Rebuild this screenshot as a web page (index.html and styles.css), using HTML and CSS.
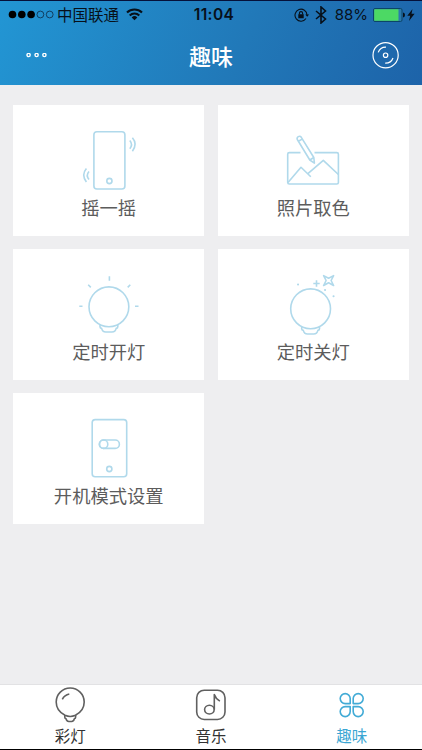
FILE: index.html
```html
<!DOCTYPE html>
<html lang="zh-CN">
<head>
    <meta charset="UTF-8">
    <meta name="viewport" content="width=device-width, initial-scale=1.0">
    <title>趣味</title>
    <link rel="stylesheet" href="styles.css">
</head>
<body>

<header class="header">
    <div class="status-bar">
        <div class="status-left">
            <svg class="signal" width="46" height="10" viewBox="0 0 46 10">
                <circle cx="4.500" cy="4.500" r="3.800"/>
                <circle cx="13.800" cy="4.500" r="3.800"/>
                <circle cx="23.100" cy="4.500" r="3.800"/>
                <circle class="off" cx="32.400" cy="4.500" r="3.400"/>
                <circle class="off" cx="41.700" cy="4.500" r="3.400"/>
            </svg>
            <span class="carrier">中国联通</span>
            <svg class="wifi" width="17" height="13" viewBox="0 0 17 13">
                <path d="M1 4.600a10.800 10.800 0 0 1 15 0M3.700 7.400a7 7 0 0 1 9.600 0"/>
                <path class="fill" d="M5.700 9.400a4.100 4.100 0 0 1 5.600 0L8.500 12.300z"/>
            </svg>
        </div>
        <span class="time">11:04</span>
        <div class="status-right">
            <svg class="lock" width="16" height="14" viewBox="0 0 16 14">
                <path d="M12 10.500A6 6 0 1 1 13 7"/>
                <path d="M5.400 6.500V5.200a1.600 1.600 0 0 1 3.200 0v1.300"/>
                <path class="fill" d="M4.300 6.200h5.400v4H4.300zM11.300 6.500h3.800L13.200 8.800z"/>
            </svg>
            <svg class="bluetooth" width="12" height="18" viewBox="0 0 12 18">
                <path d="M1 5l9.500 8L6 17V1l4.500 4L1 13"/>
            </svg>
            <span class="percent">88%</span>
            <svg class="battery" width="33" height="14" viewBox="0 0 33 14">
                <rect class="case" x="0.500" y="0.500" width="28.500" height="13" rx="1.500"/>
                <rect class="level" x="1.200" y="1.200" width="24.300" height="11.600" rx="0.600"/>
                <path d="M30 4.500q2 .4 2 2.500t-2 2.500z"/>
            </svg>
            <svg class="bolt" width="8" height="12" viewBox="0 0 8 12">
                <path d="M5.500 0L.3 6.700h2.900L2 12l5.600-7.200H4.500z"/>
            </svg>
        </div>
    </div>
    <div class="nav">
        <svg class="more" width="22" height="6" viewBox="0 0 22 6">
            <circle cx="2.600" cy="2" r="1.600"/>
            <circle cx="10.600" cy="2" r="1.600"/>
            <circle cx="18.400" cy="2" r="1.600"/>
        </svg>
        <h1 class="title">趣味</h1>
        <svg class="disc" width="28" height="28" viewBox="0 0 28 28">
            <circle cx="13.600" cy="13.200" r="12.600"/>
            <circle cx="13.600" cy="13.200" r="2.200"/>
            <path d="M6.200 10.400a8 8 0 0 1 7.800-5.200M21 16a8 8 0 0 1-7.800 5.200"/>
        </svg>
    </div>
</header>

<main class="grid">
    <div class="card">
        <svg class="icon" viewBox="0 0 80 70">
            <rect x="24.900" y="8.800" width="31" height="57.200" rx="3"/>
            <circle cx="40.400" cy="58" r="2.600"/>
            <path d="M60.800 17.500q3.400 4 0 8.300M63.400 14.800q5.400 6.200 0 13.400"/>
            <path d="M20 48.600q-3.400 4 0 8M17.400 45.600q-5.400 6.400 0 13.400"/>
        </svg>
        <p class="label">摇一摇</p>
    </div>
    <div class="card">
        <svg class="icon" viewBox="0 0 80 70">
            <path d="M27.500 29.600h-11.200a1.600 1.600 0 0 0-1.600 1.600v28.200a1.600 1.600 0 0 0 1.600 1.600h47.500a1.600 1.600 0 0 0 1.600-1.600V31.200a1.600 1.600 0 0 0-1.600-1.600H41.500"/>
            <path d="M15 59.500L28 44.300l9.800 9.500M34.600 50.800L50.300 37.300 65.400 51.500"/>
            <path d="M24.300 16.500a2.300 2.300 0 0 1 4-2.200L40.800 34.500l.6 5.700-4.600-3.200zM25.400 18.300l4.200-2.400M36.800 37l4-2.500"/>
        </svg>
        <p class="label">照片取色</p>
    </div>
    <div class="card">
        <svg class="icon" viewBox="0 0 80 70">
            <circle cx="39.900" cy="39.800" r="19.900"/>
            <path d="M31 58v1.800q0 1.400 1.600 1.600.8 3.600 4.200 3.600h6.200q3.400 0 4.200-3.600 1.600-.2 1.600-1.600V58"/>
            <path d="M40.400 9.300v4.500M10.300 39.200h3.200M66 39.200h3.500M19.200 17.800l2.600 2.600M61.300 17.800l-2.600 2.600"/>
        </svg>
        <p class="label">定时开灯</p>
    </div>
    <div class="card">
        <svg class="icon" viewBox="0 0 80 70">
            <circle cx="37.600" cy="41.800" r="19.900"/>
            <path d="M28.700 60v1.800q0 1.400 1.600 1.600.8 3.600 4.200 3.600h6.200q3.400 0 4.200-3.600 1.600-.2 1.600-1.600V60"/>
            <path d="M50.600 8.600L55.600 11.300 60.600 8.600 58.100 13.500 60.600 18.500 55.600 15.800 50.600 18.500 53.100 13.500z"/>
            <path d="M43.500 13.300v6.400M40.300 16.500h6.400"/>
            <path class="dots" d="M25 17.500h.1M52 23h.1M60.500 29.200h.1"/>
        </svg>
        <p class="label">定时关灯</p>
    </div>
    <div class="card">
        <svg class="icon" viewBox="0 0 80 70">
            <rect x="23.200" y="8.600" width="34.500" height="57.200" rx="3"/>
            <rect x="30.400" y="29" width="20" height="8.400" rx="4.200"/>
            <circle cx="34.600" cy="33.200" r="4.200"/>
            <circle cx="40.300" cy="58" r="2.600"/>
        </svg>
        <p class="label">开机模式设置</p>
    </div>
</main>

<nav class="tabs">
    <a class="tab">
        <svg class="tab-icon" viewBox="0 0 40 38">
            <path d="M15 29.300Q6.200 24.800 6.200 16a14 14 0 0 1 28 0Q34.200 24.800 25.400 29.300 20.200 31.700 15 29.300z"/>
            <path d="M14.800 29v2.200q0 1.200 1.200 1.500.5 2.800 2.800 2.800h2.800q2.300 0 2.800-2.800 1.200-.3 1.200-1.500V29M12.300 13.300q2.200-4.300 7-5.300"/>
        </svg>
        <span>彩灯</span>
    </a>
    <a class="tab">
        <svg class="tab-icon" viewBox="0 0 40 38">
            <rect x="5.700" y="4.200" width="28.300" height="29.300" rx="7.500"/>
            <ellipse cx="18.400" cy="23.600" rx="4.800" ry="4.400"/>
            <path d="M23.300 23.600V8.600q1.200 4 5.600 6.500"/>
        </svg>
        <span>音乐</span>
    </a>
    <a class="tab active">
        <svg class="tab-icon" viewBox="0 0 40 38">
            <path d="M18.200 17.600h-5a5 5 0 1 1 5-5zM21.200 17.600h5a5 5 0 1 0-5-5zM18.200 20.600h-5a5 5 0 1 0 5 5zM21.200 20.600h5a5 5 0 1 1-5 5z"/>
        </svg>
        <span>趣味</span>
    </a>
</nav>

</body>
</html>
```
FILE: styles.css
```css
* {
    box-sizing: border-box;
}

body {
    margin: 0;
    height: 750px;
    display: flex;
    flex-direction: column;
    overflow: hidden;
    background-color: #eeeef0;
    font-family: Inter, "Noto Sans CJK SC", sans-serif;
}

svg {
    display: block;
    flex-shrink: 0;
    fill: none;
}

.header {
    height: 85px;
    border-top: 1px solid #05113a;
    background: linear-gradient(115deg, #2296d4 0%, #2178b8 58%, #1d63a9 100%);
}

.status-bar {
    height: 27px;
    padding: 0 7px 0 8px;
    display: grid;
    grid-template-columns: 1fr auto 1fr;
    align-items: center;
    color: #07101a;
    font-size: 15.5px;
    line-height: 27px;
}

.status-left,
.status-right {
    display: flex;
    align-items: center;
}

.status-right {
    justify-content: flex-end;
}

.signal {
    fill: #000;
}

.signal .off {
    fill: none;
    stroke: #0d2b45;
    stroke-width: 0.8;
}

.carrier {
    margin: 0 7px 0 3px;
    padding-top: 2px;
    line-height: 25px;
}

.wifi,
.lock,
.bluetooth {
    stroke: #07101a;
    stroke-width: 1.1;
}

.wifi {
    stroke-width: 2.1;
}

.fill {
    fill: #07101a;
    stroke: none;
}

.time {
    padding-left: 5px;
    font-size: 15.5px;
    font-weight: 600;
    letter-spacing: 0.4px;
}

.bluetooth {
    margin: 0 8px 0 5px;
    stroke-width: 1.6;
}

.percent {
    margin-right: 5px;
    font-size: 15px;
}

.battery {
    fill: #07101a;
}

.battery .case {
    fill: #2b79ad;
    stroke: #0c4568;
}

.battery .level {
    fill: #4cd964;
}

.bolt {
    margin-left: 1px;
    fill: #07101a;
}

.nav {
    height: 55px;
    padding: 0 22px 0 26px;
    display: grid;
    grid-template-columns: 1fr auto 1fr;
    align-items: center;
    stroke: #fff;
}

.more {
    stroke-width: 1.4;
}

.title {
    margin: 0;
    padding: 2px 4px 0 0;
    color: #fff;
    font-size: 22px;
    font-weight: 500;
    line-height: 50px;
    stroke: none;
}

.disc {
    justify-self: end;
    stroke-width: 1.2;
}

.grid {
    flex: 1;
    padding: 20px 13px;
    display: grid;
    grid-template-columns: 1fr 1fr;
    grid-auto-rows: 131px;
    align-content: start;
    gap: 13.2px;
}

.card {
    padding-top: 18px;
    background-color: #fff;
    text-align: center;
}

.icon {
    width: 80px;
    height: 70px;
    margin: 0 auto;
    stroke: #b0d9eb;
    stroke-width: 1.6;
    stroke-linejoin: round;
}

.dots {
    stroke-width: 2;
    stroke-linecap: round;
}

.label {
    margin: 0;
    color: #5c5c5c;
    font-size: 18.3px;
    line-height: 31px;
}

.tabs {
    height: 66px;
    padding-top: 1px;
    display: flex;
    border-top: 1px solid #e2e2e4;
    border-bottom: 1px solid #000;
    background-color: #fff;
}

.tab {
    flex: 1;
    display: flex;
    flex-direction: column;
    align-items: center;
    color: #333;
    font-size: 15.5px;
    line-height: 25px;
}

.tab-icon {
    width: 40px;
    height: 38px;
    stroke: #606060;
    stroke-width: 1.6;
    stroke-linejoin: round;
}

.active {
    color: #3aa6d3;
}

.active .tab-icon {
    stroke: #42abd6;
}
```
